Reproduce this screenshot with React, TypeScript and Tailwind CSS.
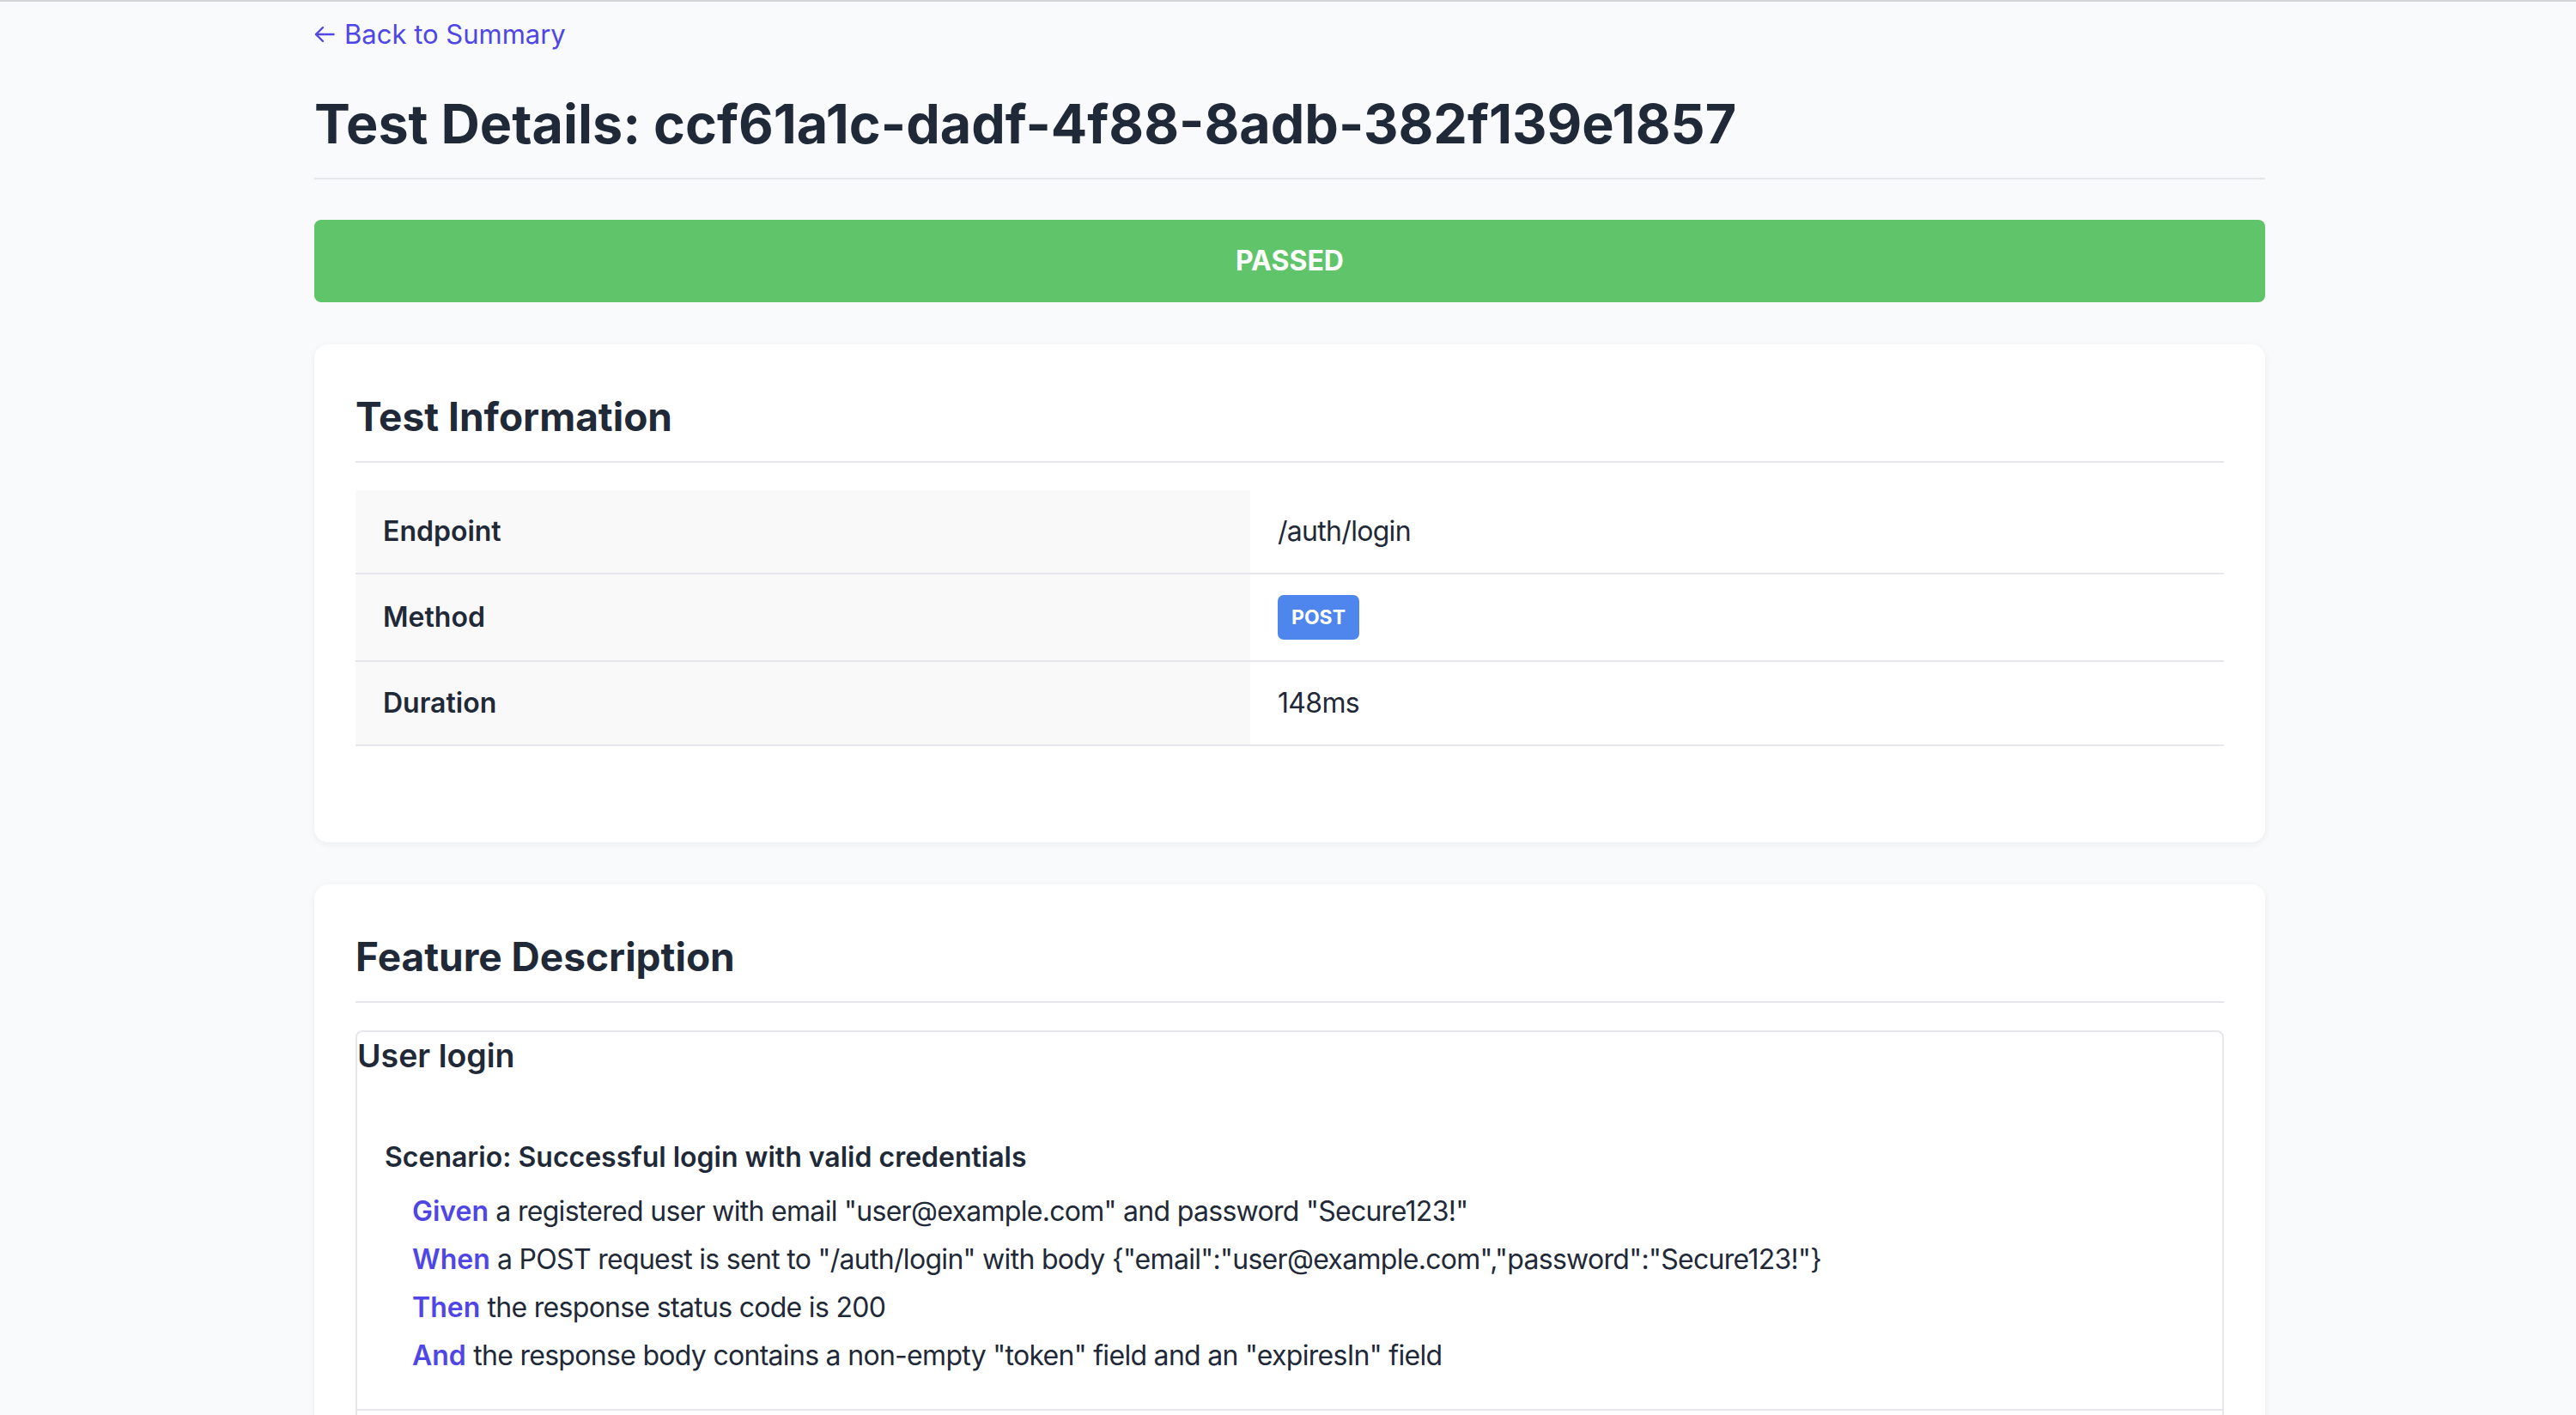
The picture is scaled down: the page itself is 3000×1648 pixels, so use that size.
const rows = [
  { label: "Endpoint", value: "/auth/login" },
  { label: "Method", value: "POST", badge: true },
  { label: "Duration", value: "148ms" },
];

const steps = [
  { kw: "Given", text: 'a registered user with email "user@example.com" and password "Secure123!"' },
  {
    kw: "When",
    text: 'a POST request is sent to "/auth/login" with body {"email":"user@example.com","password":"Secure123!"}',
  },
  { kw: "Then", text: "the response status code is 200" },
  { kw: "And", text: 'the response body contains a non-empty "token" field and an "expiresIn" field' },
];

function BackArrow() {
  return (
    <svg width="24" height="20" viewBox="0 0 24 20" fill="none" stroke="currentColor" strokeWidth="2.4" strokeLinecap="round" strokeLinejoin="round">
      <path d="M22.5 10H2" />
      <path d="M10 2L2 10l8 8" />
    </svg>
  );
}

function Card({ title, children }: { title: string; children: React.ReactNode }) {
  return (
    <section className="mb-[49px] rounded-2xl bg-white p-12 shadow-[0_2px_8px_rgba(0,0,0,0.06)]">
      <h2 className="mb-8 border-b-2 border-[#e5e7eb] pb-4 text-[46px] font-bold leading-[72px] text-[#1f2937]">
        {title}
      </h2>
      {children}
    </section>
  );
}

export default function App() {
  return (
    <div className="min-h-screen border-t-2 border-[#d4d4d8] bg-[#f9fafb] font-['Inter',sans-serif] text-[#1f2937]">
      <div className="mx-auto w-[2400px] pl-[66px] pr-[62px] pt-[18px]">
        <a href="#" className="flex items-center gap-[11px] text-[31px] leading-[40px] text-[#4f46e5]">
          <BackArrow />
          <span>Back to Summary</span>
        </a>

        <h1 className="mt-[47px] mb-[47px] border-b-2 border-[#e5e7eb] pb-[26px] text-[62.8px] font-bold leading-[74px] text-[#1f2937]">
          Test Details: ccf61a1c-dadf-4f88-8adb-382f139e1857
        </h1>

        <div className="mb-[49px] flex h-24 items-center justify-center rounded-[8px] bg-[#60c46b] text-[32px] font-bold uppercase text-white">
          Passed
        </div>

        <Card title="Test Information">
          <div className="mb-16">
            {rows.map((r) => (
              <div key={r.label} className="flex border-b-2 border-[#e5e7eb]">
                <div className="flex w-[1042px] shrink-0 items-center bg-[#f9f9f9] px-8 py-6 text-[32px] font-semibold leading-[48px]">
                  {r.label}
                </div>
                <div className="flex flex-1 items-center px-8 py-6 text-[32px] leading-[48px] tracking-[-0.7px]">
                  {r.badge ? (
                    <span className="inline-flex h-[52px] items-center rounded-[7px] bg-[#4f86ee] px-[16px] text-[23px] font-bold leading-none tracking-normal text-white">
                      {r.value}
                    </span>
                  ) : (
                    r.value
                  )}
                </div>
              </div>
            ))}
          </div>
        </Card>

        <Card title="Feature Description">
          <div className="rounded-[8px] border-2 border-[#e5e7eb]">
            <h3 className="text-[37.5px] font-semibold leading-[56px]">User login</h3>
            <div className="mt-[66px] border-b-2 border-[#e5e7eb] px-8 pb-[34px]">
              <div className="mb-[11px] text-[32px] font-semibold leading-[48px]">
                Scenario: Successful login with valid credentials
              </div>
              <div className="pl-8">
                {steps.map((s) => (
                  <div key={s.kw} className="text-[32px] leading-[56px] tracking-[-0.7px]">
                    <span className="font-semibold tracking-normal text-[#4f46e5]">{s.kw}</span> {s.text}
                  </div>
                ))}
              </div>
            </div>
            <div className="h-32" />
          </div>
        </Card>
      </div>
    </div>
  );
}
